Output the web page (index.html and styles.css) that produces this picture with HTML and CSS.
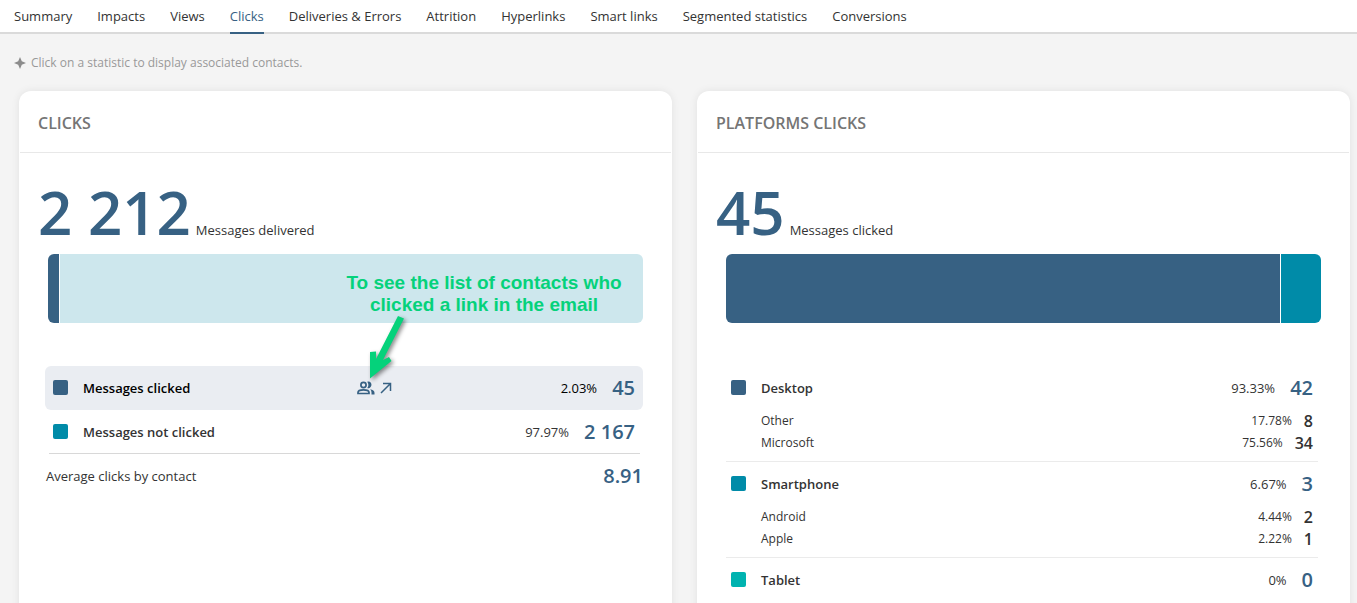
FILE: index.html
```html
<!DOCTYPE html>
<html lang="en">
<head>
<meta charset="utf-8">
<meta name="viewport" content="width=device-width, initial-scale=1">
<title>Clicks</title>
<link rel="stylesheet" href="styles.css">
</head>
<body>
<nav class="tabs">
  <a class="tab" href="#summary">Summary</a>
  <a class="tab" href="#impacts">Impacts</a>
  <a class="tab" href="#views">Views</a>
  <a class="tab tab-active" href="#clicks" aria-current="page">Clicks</a>
  <a class="tab" href="#deliveries">Deliveries &amp; Errors</a>
  <a class="tab" href="#attrition">Attrition</a>
  <a class="tab" href="#hyperlinks">Hyperlinks</a>
  <a class="tab" href="#smart-links">Smart links</a>
  <a class="tab" href="#segmented">Segmented statistics</a>
  <a class="tab" href="#conversions">Conversions</a>
</nav>
<main class="page">
  <p class="hint">
    <svg class="hint-icon" viewBox="0 0 12 12" aria-hidden="true"><path d="M6 0 7.800 4.200 12 6 7.800 7.800 6 12 4.200 7.800 0 6 4.200 4.200Z"/></svg>
    Click on a statistic to display associated contacts.
  </p>
  <div class="cards">
    <section class="card">
      <h2 class="card-title">CLICKS</h2>
      <p class="total"><strong class="total-value">2 212</strong> Messages delivered</p>
      <div class="bar">
        <div class="segment blue" style="width: 2.03%"></div>
        <div class="segment pale"></div>
      </div>
      <ul class="stats">
        <li class="row row-selected">
          <span class="swatch blue"></span>
          <span class="label">Messages clicked</span>
          <span class="actions">
            <button class="icon-button" type="button" aria-label="Show contacts">
              <svg class="icon-people" viewBox="0 0 18 14" aria-hidden="true">
                <g fill="none" stroke="currentColor" stroke-width="1.700"><circle cx="6.500" cy="4" r="2.600"/><path d="M1 12.500v-1C1 9.800 4 8.900 6.500 8.900S12 9.800 12 11.500v1Z"/></g>
                <path fill="currentColor" d="M10.300.7c4.600-1.300 5.800 5.300 1.500 6.500q-.8.200-1.500-.1 2.200-3.100 0-6.400ZM13.200 8.200c2.700.5 4.300 1.700 4.300 3.500v1.700h-3v-1.900q0-1.900-1.300-3.300Z"/>
              </svg>
            </button>
            <button class="icon-button" type="button" aria-label="Open">
              <svg class="icon-open" viewBox="0 0 12 12" aria-hidden="true"><path fill="none" stroke="currentColor" stroke-width="1.500" d="M1 11 10.500 1.500M3 1.500h7.500V9"/></svg>
            </button>
          </span>
          <span class="percent">2.03%</span>
          <span class="value">45</span>
        </li>
        <li class="row row-inset">
          <span class="swatch teal"></span>
          <span class="label">Messages not clicked</span>
          <span class="percent">97.97%</span>
          <span class="value">2 167</span>
        </li>
        <li class="row row-plain">
          <span class="label">Average clicks by contact</span>
          <span class="value">8.91</span>
        </li>
      </ul>
      <div class="callout">
        <p class="callout-text">To see the list of contacts who<br>clicked a link in the email</p>
        <svg class="callout-arrow" viewBox="0 0 50 72" aria-hidden="true"><path d="M40 6 46 8.500 25 50 31 47 33.500 51 12 68.500 12 42 18 41.500 18 49Z"/></svg>
      </div>
    </section>
    <section class="card">
      <h2 class="card-title">PLATFORMS CLICKS</h2>
      <p class="total"><strong class="total-value">45</strong> Messages clicked</p>
      <div class="bar">
        <div class="segment blue" style="width: 93.33%"></div>
        <div class="segment teal"></div>
      </div>
      <ul class="stats stats-platforms">
        <li class="group">
          <div class="row"><span class="swatch blue"></span><span class="label">Desktop</span><span class="percent">93.33%</span><span class="value">42</span></div>
          <ul class="details">
            <li class="detail"><span class="detail-label">Other</span><span>17.78%</span><span class="detail-value">8</span></li>
            <li class="detail"><span class="detail-label">Microsoft</span><span>75.56%</span><span class="detail-value">34</span></li>
          </ul>
        </li>
        <li class="group">
          <div class="row"><span class="swatch teal"></span><span class="label">Smartphone</span><span class="percent">6.67%</span><span class="value">3</span></div>
          <ul class="details">
            <li class="detail"><span class="detail-label">Android</span><span>4.44%</span><span class="detail-value">2</span></li>
            <li class="detail"><span class="detail-label">Apple</span><span>2.22%</span><span class="detail-value">1</span></li>
          </ul>
        </li>
        <li class="group">
          <div class="row"><span class="swatch aqua"></span><span class="label">Tablet</span><span class="percent">0%</span><span class="value">0</span></div>
        </li>
      </ul>
    </section>
  </div>
</main>
</body>
</html>
```
FILE: styles.css
```css
* { box-sizing: border-box; }

body {
  margin: 0;
  height: 100vh;
  overflow: hidden;
  background: #f4f4f4;
  color: #333;
  font: 13px/20px "Open Sans", sans-serif;
}

p, ul, h2 { margin: 0; padding: 0; }
ul { list-style: none; }

.tabs {
  display: flex;
  gap: 25px;
  height: 34px;
  padding: 0 14px;
  background: #fff;
  border-bottom: 2px solid #dadada;
}
.tab {
  height: 34px;
  line-height: 32px;
  color: #333;
  text-decoration: none;
  white-space: nowrap;
  border-bottom: 2px solid transparent;
}
.tab-active { color: #376183; border-color: #376183; }

.page { padding: 18px 7px 0 14px; }

.hint {
  display: flex;
  align-items: center;
  gap: 5px;
  color: #999;
  font-size: 12px;
  line-height: 22px;
}
.hint-icon { width: 12px; height: 12px; fill: #8c8c8c; }

.cards {
  display: grid;
  grid-template-columns: 1fr 1fr;
  gap: 25px;
  margin: 17px 0 0 5px;
}
.card {
  position: relative;
  padding: 0 1px 40px;
  background: #fff;
  border-radius: 12px;
  box-shadow: 0 0 8px rgba(0, 0, 0, 0.08);
}
.card-title {
  padding: 21px 18px 18px;
  border-bottom: 1px solid #e8e8e8;
  color: #757575;
  font-size: 16px;
  font-weight: 600;
  line-height: 22px;
}

.total {
  display: flex;
  align-items: baseline;
  gap: 5px;
  padding: 19px 18px 0;
}
.total-value {
  color: #376183;
  font-size: 60px;
  font-weight: 600;
  line-height: 80px;
}

.bar {
  display: flex;
  height: 69px;
  margin: 2px 28px 43px;
  border-radius: 6px;
  overflow: hidden;
}
.segment { flex: none; }
.segment:first-child { border-right: 1px solid #fff; }
.segment:last-child { flex: 1; }

.blue { background: #376183; }
.teal { background: #008ba8; }
.aqua { background: #00b3b0; }
.pale { background: #cde7ed; }

.stats { margin: 0 28px 0 25px; }
.stats-platforms { margin: 0 31px 0 28px; }

.row {
  display: flex;
  align-items: center;
  height: 44px;
  padding: 0 8px;
}
.row-selected {
  background: #eaedf2;
  border-radius: 6px;
  color: #000;
}
.row-inset {
  margin: 0 3px 0 4px;
  padding: 0 5px 0 4px;
  border-bottom: 1px solid #d8d8d8;
}
.row-plain { padding: 0 0 0 1px; }
.swatch {
  width: 15px;
  height: 15px;
  margin: 0 15px 1px 0;
  border-radius: 2px;
}
.label { flex: 1; font-weight: 600; }
.row-plain .label { font-weight: 400; }
.percent { margin-right: 15px; }
.value {
  color: #376183;
  font-size: 20px;
  font-weight: 600;
}
.actions {
  display: flex;
  flex: 1;
  align-items: center;
  gap: 5px;
  margin-left: 70px;
}
.icon-button {
  display: flex;
  padding: 0;
  border: 0;
  background: none;
  color: #376183;
  cursor: pointer;
}
.icon-people { width: 18px; height: 14px; }
.icon-open { width: 12px; height: 12px; }

.stats-platforms .row { padding: 0 5px; }
.group + .group { border-top: 1px solid #ebebeb; }
.details { padding: 0 5px 7px 35px; }
.detail {
  display: flex;
  align-items: center;
  gap: 12px;
  height: 22px;
  font-size: 12px;
}
.detail-label { flex: 1; }
.detail-value { font-size: 16px; font-weight: 600; }

.callout {
  position: absolute;
  top: 181px;
  right: 38px;
  width: 300px;
}
.callout-text {
  color: #05d27b;
  font: bold 19px/22px "Liberation Sans", Arial, sans-serif;
  text-align: center;
  white-space: nowrap;
}
.callout-arrow {
  display: block;
  width: 50px;
  height: 72px;
  margin-left: 24px;
  margin-top: -6px;
  fill: #05d27b;
  filter: drop-shadow(2px 2px 2px rgba(0, 0, 0, 0.45));
}
```
